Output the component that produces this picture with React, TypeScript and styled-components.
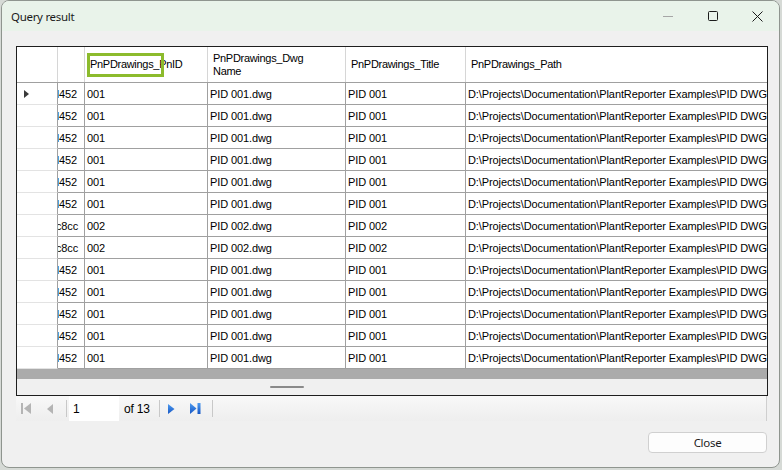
import styled, { createGlobalStyle } from 'styled-components';

const GlobalStyle = createGlobalStyle`
  html, body {
    margin: 0;
    padding: 0;
  }
  body {
    width: 782px;
    height: 470px;
    overflow: hidden;
    background: #d6dad6;
    font-family: 'Liberation Sans', Arial, sans-serif;
  }
`;

const Desktop = styled.div`
  width: 782px;
  height: 470px;
  box-sizing: border-box;
  padding: 0 2px 2px 1px;
  display: flex;
`;

const Window = styled.div`
  flex: 1;
  display: flex;
  flex-direction: column;
  border: 1px solid #8f958f;
  border-radius: 8px;
  overflow: hidden;
  background: #f0f0f0;
`;

const TitleBar = styled.div`
  height: 30px;
  flex-shrink: 0;
  display: flex;
  align-items: center;
  background: #e9f3ea;
  padding-left: 9px;
`;

const Title = styled.span`
  flex: 1;
  font-family: 'Noto Sans', 'Open Sans', sans-serif;
  font-size: 11.5px;
  letter-spacing: -0.3px;
  color: #1b1b1b;
`;

const Controls = styled.div`
  display: flex;
  height: 100%;
  margin-right: -1px;
`;

const ControlButton = styled.div`
  width: 45px;
  height: 100%;
  display: flex;
  align-items: center;
  justify-content: center;
`;

const Body = styled.div`
  flex: 1;
  display: flex;
  flex-direction: column;
  padding: 15px 11px 0 14px;
`;

const Grid = styled.div`
  height: 350px;
  box-sizing: border-box;
  border: 1px solid #1e1e1e;
  background: #ababab;
  display: flex;
  flex-direction: column;
  overflow: hidden;
`;

const HeaderRow = styled.div`
  height: 36px;
  box-sizing: border-box;
  flex-shrink: 0;
  display: flex;
  background: #fff;
  border-bottom: 1px solid #a0a0a0;
`;

const HeaderCell = styled.div<{ $w?: number }>`
  position: relative;
  ${({ $w }) => ($w ? `width: ${$w}px;` : 'flex: 1;')}
  flex-shrink: 0;
  box-sizing: border-box;
  border-right: 1px solid #d6d6d6;
  display: flex;
  align-items: center;
  padding-left: 5px;
  font-size: 11px;
  letter-spacing: -0.3px;
  line-height: 13px;
  color: #000;
  white-space: nowrap;
  &:last-child {
    border-right: none;
  }
`;

const FocusBox = styled.div`
  position: absolute;
  left: 2px;
  top: 6px;
  width: 77px;
  height: 24px;
  box-sizing: border-box;
  border: 3px solid #8cbb2d;
`;

const Row = styled.div`
  height: 22px;
  flex-shrink: 0;
  display: flex;
  background: #fff;
`;

const RowHeader = styled.div`
  width: 41px;
  flex-shrink: 0;
  box-sizing: border-box;
  border-right: 1px solid #a0a0a0;
  border-bottom: 1px solid #e3e3e3;
  display: flex;
  align-items: center;
  padding-left: 7px;
`;

const Cell = styled.div<{ $w?: number; $scrolled?: boolean }>`
  ${({ $w }) => ($w ? `width: ${$w}px;` : 'flex: 1;')}
  flex-shrink: 0;
  min-width: 0;
  box-sizing: border-box;
  border-right: 1px solid #a0a0a0;
  border-bottom: 1px solid #a0a0a0;
  display: flex;
  align-items: center;
  padding-left: ${({ $scrolled }) => ($scrolled ? '0' : '2px')};
  font-size: 11px;
  letter-spacing: -0.1px;
  color: #000;
  white-space: nowrap;
  overflow: hidden;
  &:last-child {
    border-right: none;
  }
`;

/* first column is scrolled horizontally, so its text starts left of the cell */
const ScrolledText = styled.span`
  margin-left: -5px;
`;

const EmptyArea = styled.div`
  flex: 1;
`;

const HScroll = styled.div`
  height: 16px;
  flex-shrink: 0;
  background: #f0f0f0;
  display: flex;
  align-items: center;
`;

const Thumb = styled.div`
  margin-left: 253px;
  width: 34px;
  height: 2px;
  border-radius: 1px;
  background: #8a8a8a;
`;

const Navigator = styled.div`
  height: 25px;
  flex-shrink: 0;
  display: flex;
  align-items: center;
  background: linear-gradient(#f8f8f8, #eeeeee);
  border-right: 1px solid #cfcfcf;
  margin-right: 1px;
`;

const NavButton = styled.div`
  width: 24px;
  height: 100%;
  box-sizing: border-box;
  padding-right: 4px;
  display: flex;
  align-items: center;
  justify-content: center;
`;

const Separator = styled.div`
  width: 1px;
  height: 17px;
  margin: 0 2px;
  background: #c8c8c8;
`;

const PositionBox = styled.div`
  width: 50px;
  height: 100%;
  box-sizing: border-box;
  background: #fff;
  display: flex;
  align-items: center;
  padding-left: 4px;
  font-size: 12px;
  color: #000;
`;

const CountLabel = styled.span`
  margin: 0 7px 0 5px;
  font-size: 12px;
  letter-spacing: -0.2px;
  color: #000;
`;

const Footer = styled.div`
  display: flex;
  justify-content: flex-end;
  margin-top: 11px;
  padding-right: 1px;
`;

const Button = styled.div`
  width: 119px;
  height: 21px;
  box-sizing: border-box;
  border: 1px solid #d0d0d0;
  border-radius: 4px;
  background: #fdfdfd;
  display: flex;
  align-items: center;
  justify-content: center;
  font-family: 'Noto Sans', 'Open Sans', sans-serif;
  font-size: 11.5px;
  letter-spacing: -0.3px;
  color: #1b1b1b;
`;

const COLS = [27, 123, 138, 120];

type Drawing = { id: string; pnid: string; dwg: string; title: string };

const a = { id: 'd452', pnid: '001', dwg: 'PID 001.dwg', title: 'PID 001' };
const b = { id: 'fc8cc', pnid: '002', dwg: 'PID 002.dwg', title: 'PID 002' };

const rows: Drawing[] = [a, a, a, a, a, a, b, b, a, a, a, a, a];

const PATH = 'D:\\Projects\\Documentation\\PlantReporter Examples\\PID DWG\\';

const FirstIcon = () => (
  <svg width="10" height="11" viewBox="0 0 10 11">
    <rect x="0" y="0" width="2" height="11" fill="#b4b4b4" />
    <path d="M10 0 L3 5.5 L10 11 Z" fill="#b4b4b4" />
  </svg>
);

const PrevIcon = () => (
  <svg width="6" height="10" viewBox="0 0 6 10">
    <path d="M6 0 L0 5 L6 10 Z" fill="#b4b4b4" />
  </svg>
);

const BlueGradient = ({ id }: { id: string }) => (
  <defs>
    <linearGradient id={id} x1="0" y1="0" x2="0" y2="1">
      <stop offset="0" stopColor="#4d9bf0" />
      <stop offset="1" stopColor="#1656c4" />
    </linearGradient>
  </defs>
);

const NextIcon = () => (
  <svg width="7" height="10" viewBox="0 0 7 10">
    <BlueGradient id="blueNext" />
    <path d="M0 0 L6.5 5 L0 10 Z" fill="url(#blueNext)" />
  </svg>
);

const LastIcon = () => (
  <svg width="11" height="11" viewBox="0 0 11 11">
    <BlueGradient id="blueLast" />
    <path d="M0 0 L6.5 5.5 L0 11 Z" fill="url(#blueLast)" />
    <rect x="7.5" y="0" width="3" height="11" fill="url(#blueLast)" />
  </svg>
);

export default function App() {
  return (
    <>
      <GlobalStyle />
      <Desktop>
        <Window>
          <TitleBar>
            <Title>Query result</Title>
            <Controls>
              <ControlButton>
                <svg width="10" height="10" viewBox="0 0 10 10">
                  <path d="M0 5.5 H10" stroke="#a6a6a6" strokeWidth="1" />
                </svg>
              </ControlButton>
              <ControlButton>
                <svg width="10" height="10" viewBox="0 0 10 10">
                  <rect x="0.5" y="0.5" width="9" height="9" rx="1" fill="none" stroke="#1b1b1b" strokeWidth="1" />
                </svg>
              </ControlButton>
              <ControlButton>
                <svg width="11" height="11" viewBox="0 0 11 11">
                  <path d="M0.5 0.5 L10.5 10.5 M10.5 0.5 L0.5 10.5" stroke="#1b1b1b" strokeWidth="1" />
                </svg>
              </ControlButton>
            </Controls>
          </TitleBar>

          <Body>
            <Grid>
              <HeaderRow>
                <HeaderCell $w={41} />
                <HeaderCell $w={COLS[0]} />
                <HeaderCell $w={COLS[1]}>
                  PnPDrawings_PnID
                  <FocusBox />
                </HeaderCell>
                <HeaderCell $w={COLS[2]}>
                  PnPDrawings_Dwg
                  <br />
                  Name
                </HeaderCell>
                <HeaderCell $w={COLS[3]}>PnPDrawings_Title</HeaderCell>
                <HeaderCell>PnPDrawings_Path</HeaderCell>
              </HeaderRow>

              {rows.map((r, i) => (
                <Row key={i}>
                  <RowHeader>
                    {i === 0 && (
                      <svg width="5" height="8" viewBox="0 0 5 8">
                        <path d="M0 0 L5 4 L0 8 Z" fill="#3a3a3a" />
                      </svg>
                    )}
                  </RowHeader>
                  <Cell $w={COLS[0]} $scrolled>
                    <ScrolledText>{r.id}</ScrolledText>
                  </Cell>
                  <Cell $w={COLS[1]}>{r.pnid}</Cell>
                  <Cell $w={COLS[2]}>{r.dwg}</Cell>
                  <Cell $w={COLS[3]}>{r.title}</Cell>
                  <Cell>{PATH + r.dwg}</Cell>
                </Row>
              ))}

              <EmptyArea />
              <HScroll>
                <Thumb />
              </HScroll>
            </Grid>

            <Navigator>
              <NavButton>
                <FirstIcon />
              </NavButton>
              <NavButton>
                <PrevIcon />
              </NavButton>
              <Separator />
              <PositionBox>1</PositionBox>
              <CountLabel>of 13</CountLabel>
              <Separator />
              <NavButton>
                <NextIcon />
              </NavButton>
              <NavButton>
                <LastIcon />
              </NavButton>
              <Separator />
            </Navigator>

            <Footer>
              <Button>Close</Button>
            </Footer>
          </Body>
        </Window>
      </Desktop>
    </>
  );
}
